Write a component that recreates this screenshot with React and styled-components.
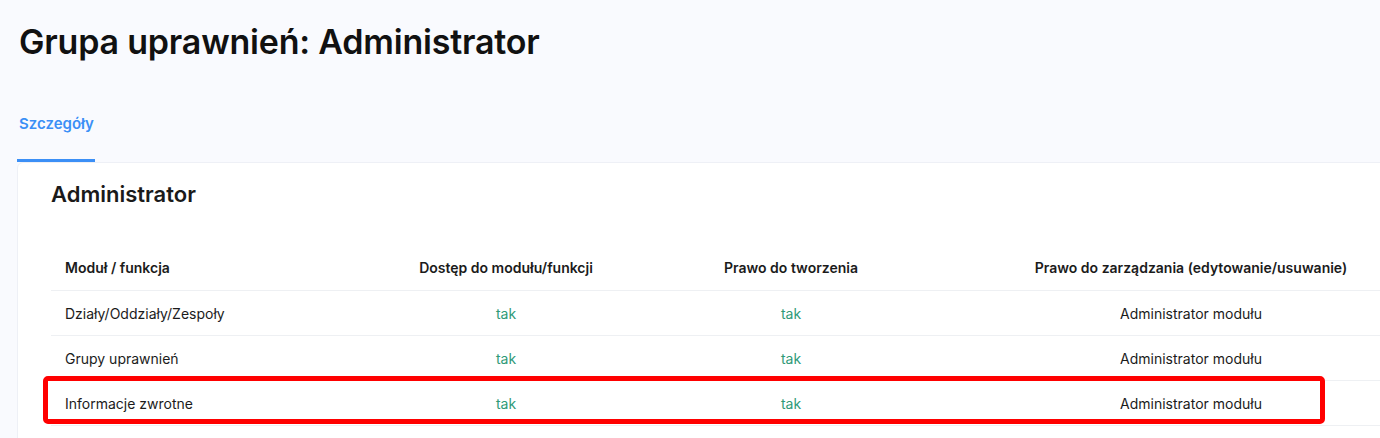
import React from 'react';
import styled, { createGlobalStyle } from 'styled-components';

const GlobalStyle = createGlobalStyle`
  html, body {
    margin: 0;
    padding: 0;
    background: #f9fafe;
    font-family: Inter, "Noto Sans", sans-serif;
    color: #161616;
    overflow: hidden;
  }
`;

const Page = styled.div`
  width: 1380px;
  height: 438px;
  padding: 21px 0 0 17px;
  box-sizing: border-box;
  overflow: hidden;
`;

const Title = styled.h1`
  margin: 0 0 0 2px;
  font-size: 34px;
  font-weight: 600;
  line-height: 42px;
  letter-spacing: -0.2px;
  color: #111;
`;

const Tabs = styled.div`
  display: flex;
  margin-top: 51px;
`;

const Tab = styled.div`
  padding: 0 1px 25px 2px;
  font-size: 15px;
  font-weight: 600;
  line-height: 20px;
  color: ${(p) => (p.$active ? '#3b8ff6' : '#555')};
  border-bottom: 3px solid ${(p) => (p.$active ? '#3b8ff6' : 'transparent')};
`;

const Card = styled.div`
  width: 1440px;
  background: #fff;
  border: 1px solid #eef0f6;
  border-radius: 6px 0 0 0;
  padding: 17px 0 0 33px;
  box-sizing: border-box;
  height: 300px;
`;

const CardTitle = styled.h2`
  margin: 0;
  font-size: 22px;
  font-weight: 600;
  line-height: 28px;
  color: #1a1a1a;
`;

const TableWrap = styled.div`
  position: relative;
  margin-top: 37px;
`;

const Row = styled.div`
  display: grid;
  grid-template-columns: 312px 286px 284px 516px;
  height: ${(p) => (p.$head ? '45px' : '44px')};
  align-items: center;
  border-bottom: 1px solid #eef0f3;
  font-size: 14px;
  font-weight: ${(p) => (p.$head ? 600 : 400)};
  color: #1b1b1b;
`;

const Cell = styled.div`
  padding-left: ${(p) => (p.$first ? '14px' : '0')};
  text-align: ${(p) => (p.$first ? 'left' : 'center')};
  color: ${(p) => (p.$yes ? '#2f9a78' : 'inherit')};
  white-space: nowrap;
`;

const Highlight = styled.div`
  position: absolute;
  left: -8px;
  top: 131px;
  width: 1282px;
  height: 48px;
  border: 5px solid #ff0000;
  border-radius: 5px;
  box-sizing: border-box;
  pointer-events: none;
`;

const rows = [
  ['Działy/Oddziały/Zespoły', 'tak', 'tak', 'Administrator modułu'],
  ['Grupy uprawnień', 'tak', 'tak', 'Administrator modułu'],
  ['Informacje zwrotne', 'tak', 'tak', 'Administrator modułu'],
];

export default function App() {
  return (
    <>
      <GlobalStyle />
      <Page>
        <Title>Grupa uprawnień: Administrator</Title>
        <Tabs>
          <Tab $active>Szczegóły</Tab>
        </Tabs>
        <Card>
          <CardTitle>Administrator</CardTitle>
          <TableWrap>
            <Row $head>
              <Cell $first>Moduł / funkcja</Cell>
              <Cell>Dostęp do modułu/funkcji</Cell>
              <Cell>Prawo do tworzenia</Cell>
              <Cell>Prawo do zarządzania (edytowanie/usuwanie)</Cell>
            </Row>
            {rows.map((r) => (
              <Row key={r[0]}>
                <Cell $first>{r[0]}</Cell>
                <Cell $yes>{r[1]}</Cell>
                <Cell $yes>{r[2]}</Cell>
                <Cell>{r[3]}</Cell>
              </Row>
            ))}
            <Highlight />
          </TableWrap>
        </Card>
      </Page>
    </>
  );
}
